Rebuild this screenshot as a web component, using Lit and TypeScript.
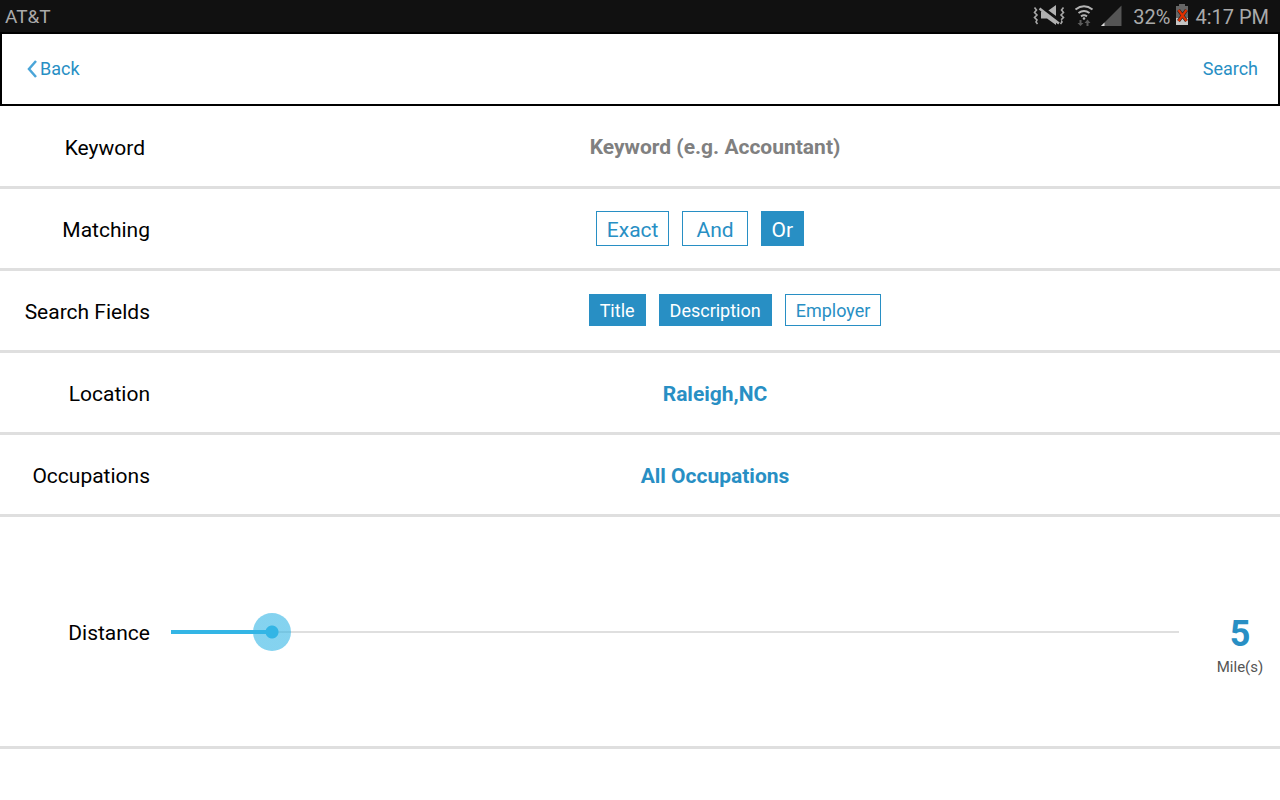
import { LitElement, html, css, svg } from "lit";
import { customElement, state } from "lit/decorators.js";
import { classMap } from "lit/directives/class-map.js";
import { styleMap } from "lit/directives/style-map.js";

@customElement("status-bar")
class StatusBar extends LitElement {
  static styles = css`
    :host {
      display: flex;
      align-items: center;
      justify-content: space-between;
      box-sizing: border-box;
      height: 32px;
      padding: 2px 11px 0 5px;
      background: #111;
      color: #aaa;
      font-size: 20px;
      line-height: 30px;
    }
    .carrier {
      font-size: 19px;
    }
    .tray {
      display: flex;
      align-items: center;
    }
    .icons {
      margin-right: 10px;
    }
    .battery {
      margin: 0 6px 0 5px;
    }
    svg {
      display: block;
    }
  `;

  render() {
    return html`
      <span class="carrier">AT&amp;T</span>
      <div class="tray">
        <svg class="icons" width="90" height="30" viewBox="0 2 90 30" aria-hidden="true">
          ${svg`
            <g fill="none" stroke="#a8a8a8" stroke-width="1.6">
              <path d="M1.500 7.500l2 2.500-2 2.500 2.500 2.500-2.500 2.500 2.500 2.500-1 2 1.500 2" />
              <path d="M30.500 7.500l-2 2.500 2 2.500-2.500 2.500 2.500 2.500-2.500 2.500 1 2-1.500 2" />
            </g>
            <path d="M8 11.500h6l9-6.500v20l-9-6.500H8z" fill="#b0b0b0" />
            <path d="M7 6.500l20.500 15" stroke="#111" stroke-width="3.500" />
            <path d="M6.500 8.500l19.500 15" stroke="#b0b0b0" stroke-width="2.400" />
            <g fill="none" stroke="#b4b4b4" stroke-width="2">
              <path d="M42.500 9.500q8.500-6.500 17 0" />
              <path d="M45.500 13q5.500-4 11 0" />
              <path d="M48 16.300q3-2 6 0" />
            </g>
            <circle cx="51" cy="18.500" r="1.300" fill="#b4b4b4" />
            <path d="M46.500 20h2v3h2l-3 3-3-3h2zM53.500 26h2v-3h2l-3-3.500-3 3.500h2z" fill="#5c5c5c" />
            <path d="M88.500 5.500V26H68z" fill="#555" />
            <path d="M71.500 22.500V26H68z" fill="#ddd" />
          `}
        </svg>
        <span>32%</span>
        <svg class="battery" width="14" height="30" viewBox="0 2 14 30" aria-hidden="true">
          <path d="M4 4h6v2h3v12H1V6h3z" fill="#666" />
          <path d="M1 18h12v7H1z" fill="#c4c4c4" />
          <path d="M3.500 10l8 11M11.500 10l-8 11" stroke="#222" stroke-width="3.500" />
          <path d="M3.500 10l8 11M11.500 10l-8 11" stroke="#e03000" stroke-width="2.200" />
        </svg>
        <span>4:17 PM</span>
      </div>
    `;
  }
}

@customElement("app-root")
class AppRoot extends LitElement {
  @state() matching = "Or";
  @state() fields = ["Title", "Description"];
  @state() distance = 5;

  static styles = css`
    :host {
      display: block;
      min-height: 100vh;
      background: #fff;
      color: #000;
      font-family: Roboto, "Liberation Sans", sans-serif;
    }
    button,
    input {
      font-family: inherit;
      margin: 0;
      padding: 0;
      border: 0;
      border-radius: 0;
      background: none;
    }
    button {
      cursor: pointer;
    }
    header {
      display: flex;
      align-items: center;
      justify-content: space-between;
      box-sizing: border-box;
      height: 74px;
      padding: 0 20px 0 24px;
      border: 2px solid #000;
    }
    .nav {
      display: flex;
      align-items: center;
      gap: 2px;
      color: #288fc4;
      font-size: 18px;
      line-height: 24px;
      text-decoration: none;
    }
    .form {
      padding-top: 1px;
    }
    .row {
      display: grid;
      grid-template-columns: 150px minmax(0, 1fr);
      align-items: center;
      box-sizing: border-box;
      min-height: 82px;
      border-bottom: 3px solid #dfdfdf;
    }
    .label {
      padding-top: 2px;
      font-size: 21px;
      line-height: 26px;
      text-align: right;
    }
    .keyword .label {
      padding-right: 5px;
    }
    .value {
      width: 100%;
      color: #288fc4;
      font-size: 21px;
      font-weight: 700;
      line-height: 26px;
      text-align: center;
      outline: none;
    }
    button.value {
      padding-top: 2px;
    }
    .value::placeholder {
      color: #808080;
      opacity: 1;
    }
    .chips {
      display: flex;
      justify-content: center;
      gap: 13px;
    }
    .matching .chips {
      padding-right: 30px;
    }
    .fields .chips {
      padding: 0 0 2px 40px;
    }
    .chip {
      box-sizing: border-box;
      height: 35px;
      padding: 2px 10px 0;
      border: 1px solid #288fc4;
      color: #288fc4;
      background: #fff;
      font-size: 21px;
      line-height: 26px;
    }
    .chip.wide {
      padding-inline: 13px;
    }
    .fields .chip {
      height: 32px;
      font-size: 18px;
    }
    .chip.on {
      color: #fff;
      background: #288fc4;
    }
    .distance {
      grid-template-columns: 150px minmax(0, 1fr) 80px;
      min-height: 232px;
    }
    .slider {
      appearance: none;
      justify-self: stretch;
      min-width: 0;
      height: 38px;
      margin: 0 2px;
      outline: none;
    }
    .slider::-webkit-slider-runnable-track {
      height: 38px;
      padding: 0;
      background:
        linear-gradient(#33b5e5, #33b5e5) 19px 50% / calc((100% - 38px) * var(--fill)) 4px no-repeat,
        linear-gradient(#dfdfdf, #dfdfdf) 50% 50% / calc(100% - 38px) 2px no-repeat;
    }
    .slider::-webkit-slider-thumb {
      appearance: none;
      width: 38px;
      height: 38px;
      border-radius: 50%;
      background: radial-gradient(circle, #33b5e5 6px, rgba(51, 181, 229, 0.6) 7px);
    }
    .amount {
      display: flex;
      flex-direction: column;
      align-items: center;
      padding-top: 28px;
    }
    .number {
      color: #288fc4;
      font-size: 36px;
      font-weight: 700;
      line-height: 42px;
    }
    .unit {
      color: #555;
      font-size: 15px;
      line-height: 24px;
    }
  `;

  toggleField(name: string) {
    this.fields = this.fields.includes(name)
      ? this.fields.filter((f) => f !== name)
      : [...this.fields, name];
  }

  chip(name: string, on: boolean, pick: () => void) {
    return html`<button
      type="button"
      class=${classMap({ chip: true, on, wide: name === "And" })}
      aria-pressed=${on ? "true" : "false"}
      @click=${pick}
    >${name}</button>`;
  }

  render() {
    return html`
      <status-bar></status-bar>
      <header>
        <a class="nav" href="#back">
          <svg width="12" height="18" viewBox="0 0 12 18" aria-hidden="true">
            <path d="M10 1L3 9l7 8" fill="none" stroke="#4aa5d8" stroke-width="2.500" />
          </svg>Back</a>
        <a class="nav" href="#search">Search</a>
      </header>
      <form class="form" @submit=${(e: Event) => e.preventDefault()}>
        <div class="row keyword">
          <label class="label" for="keyword">Keyword</label>
          <input class="value" id="keyword" type="text" placeholder="Keyword (e.g. Accountant)" />
        </div>
        <div class="row matching">
          <span class="label" id="matching">Matching</span>
          <div class="chips" role="group" aria-labelledby="matching">
            ${["Exact", "And", "Or"].map((n) =>
              this.chip(n, this.matching === n, () => (this.matching = n)))}
          </div>
        </div>
        <div class="row fields">
          <span class="label" id="fields">Search Fields</span>
          <div class="chips" role="group" aria-labelledby="fields">
            ${["Title", "Description", "Employer"].map((n) =>
              this.chip(n, this.fields.includes(n), () => this.toggleField(n)))}
          </div>
        </div>
        <div class="row">
          <label class="label" for="location">Location</label>
          <button class="value" id="location" type="button">Raleigh,NC</button>
        </div>
        <div class="row">
          <label class="label" for="occupations">Occupations</label>
          <button class="value" id="occupations" type="button">All Occupations</button>
        </div>
        <div class="row distance">
          <label class="label" for="distance">Distance</label>
          <input
            class="slider"
            id="distance"
            type="range"
            min="0"
            max="50"
            .value=${String(this.distance)}
            style=${styleMap({ "--fill": String(this.distance / 50) })}
            @input=${(e: Event) => (this.distance = Number((e.target as HTMLInputElement).value))}
          />
          <div class="amount">
            <span class="number">${this.distance}</span>
            <span class="unit">Mile(s)</span>
          </div>
        </div>
      </form>
    `;
  }
}
